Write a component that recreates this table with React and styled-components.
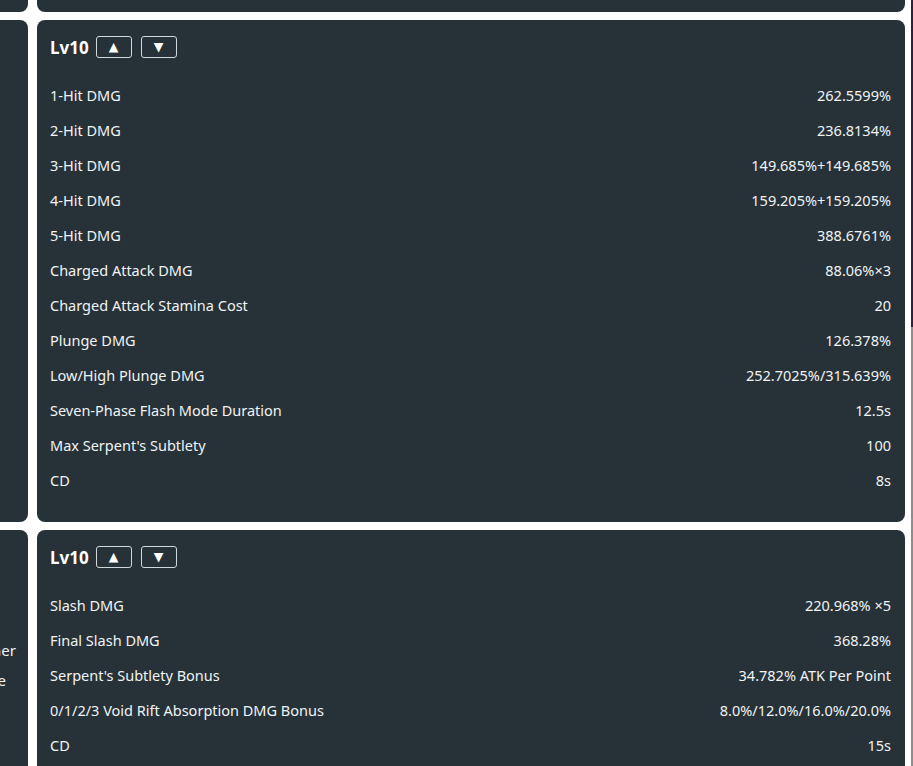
import React from 'react'
import styled, { createGlobalStyle } from 'styled-components'

const GlobalStyle = createGlobalStyle`
  html, body {
    margin: 0;
    padding: 0;
    background: #fff;
    overflow: hidden;
  }
  body {
    font-family: "Noto Sans", "Open Sans", sans-serif;
  }
`

const Page = styled.div`
  display: flex;
  width: 913px;
  height: 766px;
  overflow: hidden;
`

const Content = styled.div`
  flex: 1;
  padding-right: 6px;
  overflow: hidden;
`

const Edge = styled.div`
  width: 2px;
  background: linear-gradient(#2c2140 0 327px, #8d8d8d 327px);
`

const Grid = styled.div`
  display: grid;
  grid-template-columns: 300px 1fr;
  column-gap: 9px;
  row-gap: 8px;
  margin-left: -272px;
`

const Panel = styled.div`
  background: #263238;
  border-radius: 8px;
  color: #f1f3f4;
  box-sizing: border-box;
  ${p => p.$stub && `
    height: 12px;
    border-top-left-radius: 0;
    border-top-right-radius: 0;
  `}
`

const SidePanel = styled(Panel)`
  padding: 105px 12px 0 0;
  text-align: right;
`

const SideLine = styled.div`
  font-size: 15px;
  line-height: 30px;
  white-space: nowrap;
  margin-right: ${p => p.$inset || 0}px;
`

const TalentPanel = styled(Panel)`
  padding: 16px 14px 25px 13px;
`

const Header = styled.div`
  display: flex;
  align-items: center;
  height: 22px;
  margin-bottom: 19px;
`

const Level = styled.span`
  font-size: 17px;
  font-weight: 700;
  margin-right: 7px;
  color: #fff;
`

const LevelButton = styled.button`
  width: 36px;
  height: 22px;
  margin-right: 9px;
  padding: 0;
  background: transparent;
  border: 1px solid #cfd8dc;
  border-radius: 3px;
  color: #fff;
  font-size: 12.5px;
  line-height: 20px;
  font-family: "DejaVu Sans", sans-serif;
  cursor: pointer;
`

const Row = styled.div`
  display: flex;
  justify-content: space-between;
  align-items: center;
  height: 35px;
  font-size: 14.5px;
`

const Value = styled.span`
  text-align: right;
`

const normalAttack = [
  ['1-Hit DMG', '262.5599%'],
  ['2-Hit DMG', '236.8134%'],
  ['3-Hit DMG', '149.685%+149.685%'],
  ['4-Hit DMG', '159.205%+159.205%'],
  ['5-Hit DMG', '388.6761%'],
  ['Charged Attack DMG', '88.06%×3'],
  ['Charged Attack Stamina Cost', '20'],
  ['Plunge DMG', '126.378%'],
  ['Low/High Plunge DMG', '252.7025%/315.639%'],
  ['Seven-Phase Flash Mode Duration', '12.5s'],
  ["Max Serpent's Subtlety", '100'],
  ['CD', '8s'],
]

const skill = [
  ['Slash DMG', '220.968% ×5'],
  ['Final Slash DMG', '368.28%'],
  ["Serpent's Subtlety Bonus", '34.782% ATK Per Point'],
  ['0/1/2/3 Void Rift Absorption DMG Bonus', '8.0%/12.0%/16.0%/20.0%'],
  ['CD', '15s'],
]

const Talent = ({ rows }) => (
  <TalentPanel>
    <Header>
      <Level>Lv10</Level>
      <LevelButton>▲</LevelButton>
      <LevelButton>▼</LevelButton>
    </Header>
    {rows.map(([label, value]) => (
      <Row key={label}>
        <span>{label}</span>
        <Value>{value}</Value>
      </Row>
    ))}
  </TalentPanel>
)

export default function App () {
  return (
    <Page>
      <GlobalStyle />
      <Content>
        <Grid>
          <Panel $stub />
          <Panel $stub />
          <Panel />
          <Talent rows={normalAttack} />
          <SidePanel>
            <SideLine>slices enemies in a spiral manner</SideLine>
            <SideLine $inset={10}>and Void Rifts within range</SideLine>
          </SidePanel>
          <Talent rows={skill} />
        </Grid>
      </Content>
      <Edge />
    </Page>
  )
}
